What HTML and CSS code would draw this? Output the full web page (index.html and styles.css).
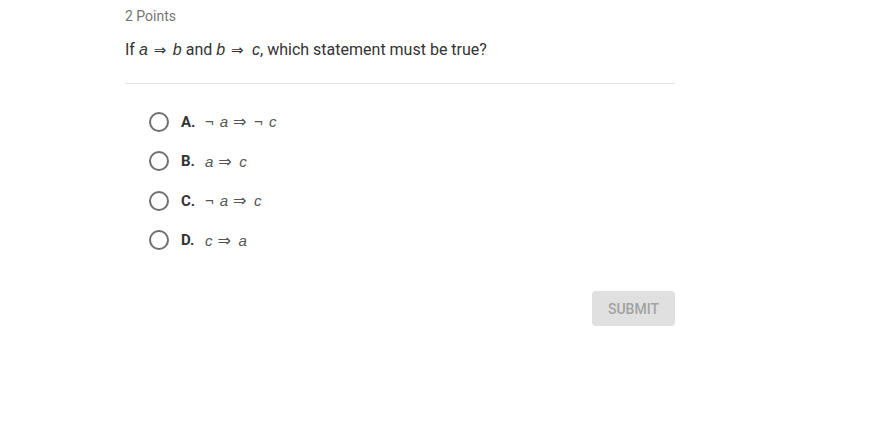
FILE: index.html
```html
<!DOCTYPE html>
<html>
<head>
<meta charset="utf-8">
<link rel="stylesheet" href="styles.css">
</head>
<body>
<div class="quiz">
  <div class="points">2 Points</div>
  <div class="question">If <span class="m">a</span><span class="arr">⇒</span><span class="m">b</span> and <span class="m">b</span><span class="arr arr2">⇒</span><span class="m">c</span>, which statement must be true?</div>
  <div class="rule"></div>
  <ul class="options">
    <li class="opt"><span class="radio"></span><span class="letter">A.</span><span class="expr"><span class="neg">¬</span><i>a</i><span class="imp">⇒</span><span class="neg">¬</span><i>c</i></span></li>
    <li class="opt"><span class="radio"></span><span class="letter">B.</span><span class="expr"><i>a</i><span class="imp">⇒</span><i>c</i></span></li>
    <li class="opt"><span class="radio"></span><span class="letter">C.</span><span class="expr"><span class="neg">¬</span><i>a</i><span class="imp">⇒</span><i>c</i></span></li>
    <li class="opt"><span class="radio"></span><span class="letter">D.</span><span class="expr"><i>c</i><span class="imp">⇒</span><i>a</i></span></li>
  </ul>
  <div class="actions"><button class="submit">SUBMIT</button></div>
</div>
</body>
</html>
```
FILE: styles.css
```css
html, body { margin: 0; padding: 0; background: #fff; }
body { font-family: Roboto, "Liberation Sans", sans-serif; }
.quiz { width: 550px; margin-left: 125px; padding-top: 8px; }
.points { font-size: 14px; color: #757575; line-height: 16px; }
.question { font-size: 16px; color: #333; margin-top: 17px; line-height: 18px; }
.question .m { font-family: "Liberation Sans", Arial, sans-serif; font-size: 16px; font-style: italic; }
.question .arr { display: inline-block; width: 12px; line-height: 1; font-family: "DejaVu Sans", sans-serif; font-size: 15px; margin: 0 7px 0 6px; }
.question .arr2 { margin-right: 9px; }
.rule { height: 1px; background: #e3e3e3; margin-top: 24px; }
.options { list-style: none; margin: 18px 0 0 0; padding: 0 0 0 24px; }
.opt { display: flex; align-items: center; height: 39.5px; }
.radio { width: 16px; height: 16px; border: 2px solid #6f6f6f; border-radius: 50%; box-sizing: content-box; }
.letter { font-weight: bold; font-size: 15px; color: #333; margin-left: 12px; width: 24px; }
.expr { font-family: "Liberation Sans", Arial, sans-serif; font-size: 15px; color: #555; }
.expr i { font-style: italic; }
.expr .neg { margin-right: 6px; }
.expr .imp { display: inline-block; width: 13px; line-height: 1; font-family: "DejaVu Sans", sans-serif; font-size: 16px; margin: 0 8px 0 5px; }
.actions { display: flex; justify-content: flex-end; margin-top: 31px; }
.submit { width: 83px; height: 35px; border: none; border-radius: 4px; background: #e0e0e0; color: #a2a2a2; font-family: Roboto, sans-serif; font-size: 14px; font-weight: 500; padding: 0; }
```
